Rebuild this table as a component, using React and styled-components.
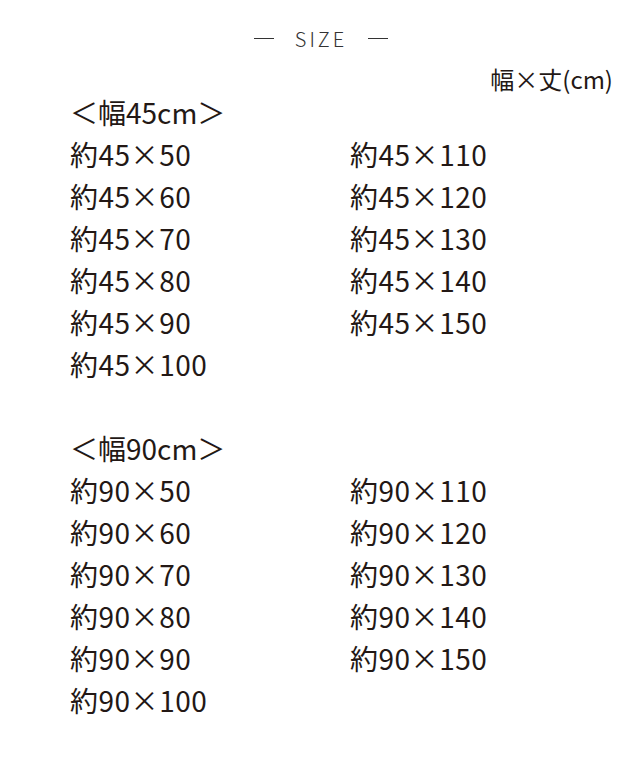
import React from "react";
import styled, { createGlobalStyle } from "styled-components";

const Global = createGlobalStyle`
  html, body { margin: 0; padding: 0; background: #ffffff; }
  body { font-family: "Noto Sans CJK JP", "Noto Sans", sans-serif; color: #231815; }
`;

const Page = styled.div`
  width: 640px;
  padding-top: 23px;
  box-sizing: border-box;
`;

const Title = styled.div`
  display: flex;
  justify-content: center;
  align-items: center;
  gap: 21px;
  height: 30px;
  font-size: 20px;
  letter-spacing: 3px;
  color: #333;
  font-weight: 300;
  padding-left: 2px;
`;

const Dash = styled.span`
  display: block;
  width: 20px;
  height: 1px;
  background: #333;
`;

const Unit = styled.div`
  margin-top: 14px;
  height: 24px;
  line-height: 24px;
  padding-right: 27px;
  text-align: right;
  font-size: 24px;
`;

const Group = styled.section`
  padding-left: 70px;
  margin-bottom: ${(p) => (p.$spaced ? "42px" : "0")};
`;

const Line = styled.div`
  height: 42px;
  line-height: 42px;
  font-size: 28px;
  white-space: nowrap;
  letter-spacing: ${(p) => (p.$item ? "0.5px" : "0")};
`;

const Columns = styled.div`
  display: flex;
`;

const Column = styled.div`
  width: 280px;
  display: flex;
  flex-direction: column;
`;

const groups = [
  { w: 45, left: [50, 60, 70, 80, 90, 100], right: [110, 120, 130, 140, 150] },
  { w: 90, left: [50, 60, 70, 80, 90, 100], right: [110, 120, 130, 140, 150] },
];

export default function App() {
  return (
    <Page>
      <Global />
      <Title>
        <Dash />
        <span>SIZE</span>
        <Dash />
      </Title>
      <Unit>幅×丈(cm)</Unit>
      {groups.map((g, i) => (
        <Group key={g.w} $spaced={i === 0}>
          <Line>＜幅{g.w}cm＞</Line>
          <Columns>
            <Column>
              {g.left.map((h) => (
                <Line key={h} $item>約{g.w}×{h}</Line>
              ))}
            </Column>
            <Column>
              {g.right.map((h) => (
                <Line key={h} $item>約{g.w}×{h}</Line>
              ))}
            </Column>
          </Columns>
        </Group>
      ))}
    </Page>
  );
}
